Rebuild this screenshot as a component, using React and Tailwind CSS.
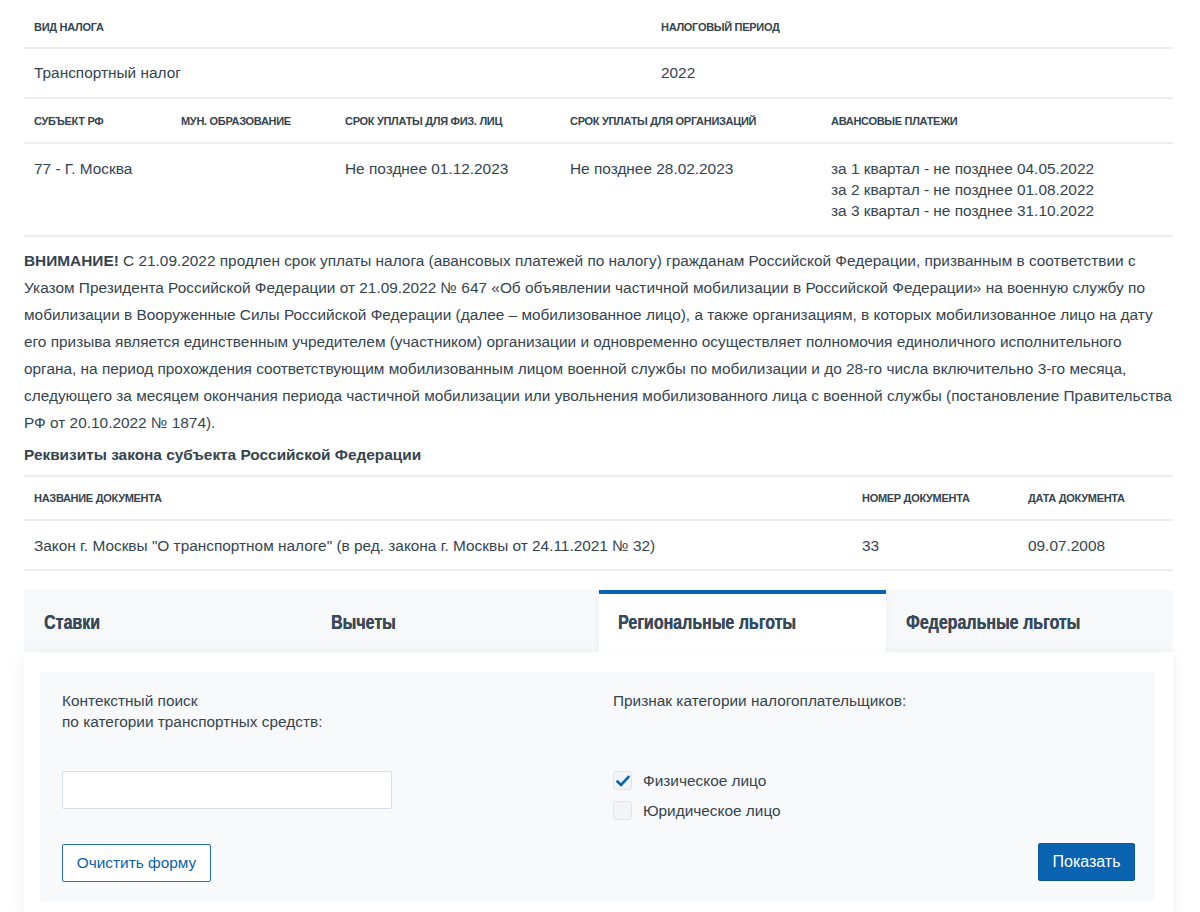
import React from "react";

const hdr = "text-[11px] font-bold uppercase leading-[14px] text-[#34444f] tracking-[-0.3px]";
const cell = "text-[15.4px] leading-[21px] text-[#34444f]";

function Check({ checked }) {
  return (
    <span className="w-[19px] h-[19px] rounded-[3px] border border-[#dde5ee] bg-[#f2f5f8] flex items-center justify-center">
      {checked && (
        <svg width="14" height="12" viewBox="0 0 14 12" fill="none">
          <path d="M1.5 6.5 L5 10 L12.5 1.8" stroke="#0a64b4" strokeWidth="2.6" strokeLinecap="round" strokeLinejoin="round" />
        </svg>
      )}
    </span>
  );
}

export default function App() {
  return (
    <div className="w-[1200px] bg-white" style={{ fontFamily: '"Liberation Sans", Arial, sans-serif' }}>
      <div className="mx-[24px] w-[1149px] pb-[20px]">
        {/* Row 1 */}
        <div className="grid grid-cols-[627px_522px] border-b-2 border-[#eceef0]">
          <div className={`${hdr} pl-[10px] pt-[20px] pb-[13px]`}>Вид налога</div>
          <div className={`${hdr} pl-[10px] pt-[20px] pb-[13px]`}>Налоговый период</div>
        </div>
        <div className="grid grid-cols-[627px_522px] border-b-2 border-[#eceef0]">
          <div className={`${cell} pl-[10px] pt-[13px] pb-[14px]`}>Транспортный налог</div>
          <div className={`${cell} pl-[10px] pt-[13px] pb-[14px]`}>2022</div>
        </div>
        {/* Row 2 */}
        <div className="grid grid-cols-[147px_164px_225px_261px_352px] border-b-2 border-[#eceef0]">
          {["Субъект РФ", "Мун. образование", "Срок уплаты для физ. лиц", "Срок уплаты для организаций", "Авансовые платежи"].map((t) => (
            <div key={t} className={`${hdr} pl-[10px] pt-[15px] pb-[14px]`}>{t}</div>
          ))}
        </div>
        <div className="grid grid-cols-[147px_164px_225px_261px_352px] border-b-2 border-[#eceef0]">
          <div className={`${cell} pl-[10px] pt-[14px] pb-[14px]`}>77 - Г. Москва</div>
          <div className={`${cell} pl-[10px] pt-[14px] pb-[14px]`}></div>
          <div className={`${cell} pl-[10px] pt-[14px] pb-[14px]`}>Не позднее 01.12.2023</div>
          <div className={`${cell} pl-[10px] pt-[14px] pb-[14px]`}>Не позднее 28.02.2023</div>
          <div className={`${cell} pl-[10px] pt-[14px] pb-[14px]`}>
            <div>за 1 квартал - не позднее 04.05.2022</div>
            <div>за 2 квартал - не позднее 01.08.2022</div>
            <div>за 3 квартал - не позднее 31.10.2022</div>
          </div>
        </div>

        <p className="mt-[10px] text-[15.4px] leading-[27px] text-[#34444f]">
          <b>ВНИМАНИЕ!</b> С 21.09.2022 продлен срок уплаты налога (авансовых платежей по налогу) гражданам Российской Федерации, призванным в соответствии с Указом Президента Российской Федерации от 21.09.2022 № 647 «Об объявлении частичной мобилизации в Российской Федерации» на военную службу по мобилизации в Вооруженные Силы Российской Федерации (далее – мобилизованное лицо), а также организациям, в которых мобилизованное лицо на дату его призыва является единственным учредителем (участником) организации и одновременно осуществляет полномочия единоличного исполнительного органа, на период прохождения соответствующим мобилизованным лицом военной службы по мобилизации и до 28-го числа включительно 3-го месяца, следующего за месяцем окончания периода частичной мобилизации или увольнения мобилизованного лица с военной службы (постановление Правительства РФ от 20.10.2022 № 1874).
        </p>
        <div className="mt-[5px] pb-[7px] text-[15.4px] leading-[27px] font-bold text-[#34444f]">
          Реквизиты закона субъекта Российской Федерации
        </div>

        <div className="grid grid-cols-[828px_166px_155px] border-y-2 border-[#eceef0]">
          <div className={`${hdr} pl-[10px] pt-[14px] pb-[14px]`}>Название документа</div>
          <div className={`${hdr} pl-[10px] pt-[14px] pb-[14px]`}>Номер документа</div>
          <div className={`${hdr} pl-[10px] pt-[14px] pb-[14px]`}>Дата документа</div>
        </div>
        <div className="grid grid-cols-[828px_166px_155px] border-b-2 border-[#eceef0]">
          <div className={`${cell} pl-[10px] pt-[14px] pb-[13px]`}>Закон г. Москвы "О транспортном налоге" (в ред. закона г. Москвы от 24.11.2021 № 32)</div>
          <div className={`${cell} pl-[10px] pt-[14px] pb-[13px]`}>33</div>
          <div className={`${cell} pl-[10px] pt-[14px] pb-[13px]`}>09.07.2008</div>
        </div>

        {/* Tabs */}
        <div className="mt-[19px] grid grid-cols-4 bg-[#f7f8f9] h-[62px]">
          {["Ставки", "Вычеты", "Региональные льготы", "Федеральные льготы"].map((t, i) => (
            <div
              key={t}
              className={
                i === 2
                  ? "bg-white border-t-4 border-[#0a63b0] flex items-center pl-[19px] pb-[2px] shadow-[0_-2px_8px_rgba(0,0,0,0.04)] relative"
                  : "flex items-center pl-[20px] pt-[2px]"
              }
            >
              <span className="inline-block origin-left scale-x-[0.8] text-[20px] font-bold text-[#37495a] whitespace-nowrap [text-shadow:0.3px_0_0_#37495a]">
                {t}
              </span>
            </div>
          ))}
        </div>

        {/* Panel */}
        <div className="bg-white shadow-[0_4px_16px_rgba(0,0,0,0.07)] pl-[16px] pr-[18px] pt-[20px] pb-[12px]">
          <div className="bg-[#f8f9fa] pl-[22px] pr-[20px] pt-[18px] pb-[19px] grid grid-cols-[551px_1fr]">
            <div className="flex flex-col items-start">
              <div className="text-[15.4px] leading-[21px] text-[#34444f]">
                Контекстный поиск
                <br />
                по категории транспортных средств:
              </div>
              <input className="mt-[39px] w-[330px] h-[38px] bg-white border border-[#d3dfec] rounded-[2px] outline-none" />
              <button className="mt-[35px] w-[149px] h-[38px] bg-white border border-[#2a6db5] rounded-[2px] text-[15.4px] text-[#0a5fae]">
                Очистить форму
              </button>
            </div>
            <div className="flex flex-col">
              <div className="text-[15.4px] leading-[21px] text-[#34444f]">Признак категории налогоплательщиков:</div>
              <label className="mt-[59px] flex items-center gap-[11px] text-[15.4px] leading-[21px] text-[#34444f]">
                <Check checked />
                Физическое лицо
              </label>
              <label className="mt-[9px] flex items-center gap-[11px] text-[15.4px] leading-[21px] text-[#34444f]">
                <Check />
                Юридическое лицо
              </label>
              <div className="mt-[22px] flex justify-end">
                <button className="w-[97px] h-[38px] bg-[#0a63b0] border border-[#0a58a0] rounded-[2px] text-[16px] text-white">
                  Показать
                </button>
              </div>
            </div>
          </div>
        </div>
      </div>
    </div>
  );
}
